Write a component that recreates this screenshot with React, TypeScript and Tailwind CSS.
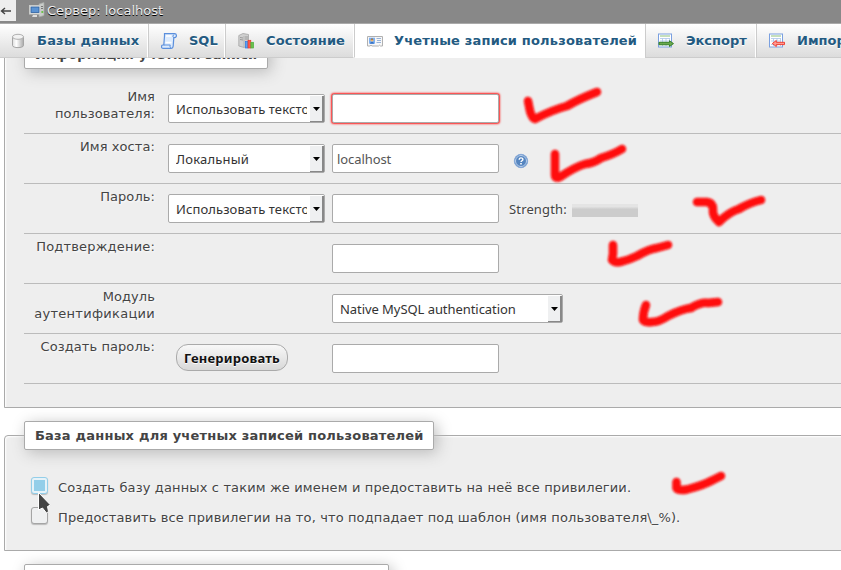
import type { ReactNode } from 'react';

function ServerIcon() {
  return (
    <svg width="16" height="16" viewBox="0 0 16 16" className="shrink-0">
      <path d="M10 2l5-1.500v13L10 15z" fill="#c9ccc9" stroke="#a5a8a5" strokeWidth=".7" />
      <path d="M11 4.500h3M11 6.500h3" stroke="#777" />
      <rect x="12.400" y="9" width="1.800" height="2" fill="#6bc24a" />
      <rect x=".5" y="3.500" width="11" height="8.500" fill="#e4e6e4" stroke="#c9cbc9" />
      <rect x="2" y="5" width="8" height="5.500" fill="#5b93d3" stroke="#2d5f9e" strokeWidth=".8" />
      <path d="M4 13h4v2H3z" fill="#ddd" />
    </svg>
  );
}

function DbIcon() {
  return (
    <svg width="16" height="16" viewBox="0 0 16 16" className="shrink-0">
      <defs>
        <linearGradient id="cyl" x1="0" x2="1" y1="0" y2="0">
          <stop offset="0" stopColor="#ddd" />
          <stop offset=".35" stopColor="#fff" />
          <stop offset="1" stopColor="#aaa" />
        </linearGradient>
      </defs>
      <path d="M3.500 3.800v8.700c0 2.800 11 2.800 11 0V3.800z" fill="url(#cyl)" stroke="#a5a5a5" />
      <ellipse cx="9" cy="3.800" rx="5.500" ry="2.500" fill="#f2f2f2" stroke="#b0b0b0" />
    </svg>
  );
}

function SqlIcon() {
  return (
    <svg width="16" height="16" viewBox="0 0 16 16" className="shrink-0">
      <path d="M3.500.6h10c2.600 0 2.400 4 .3 4h-1l-.6 8.400c-.2 1.500-1 2.400-2.200 2.400H2c-2 0-2-3.400 0-3.400h.8L3.500 3z" fill="#dcebfd" stroke="#5b8fdc" strokeWidth="1.200" />
      <path d="M2.800 12h6.500c-.8 1 0 3 .7 3.200M12.700 4.500c-1.200-.6-1-2.500.5-2.900" fill="none" stroke="#5b8fdc" />
      <path d="M5 3h5.500M4.500 9.500h6" stroke="#fff" strokeWidth="1.500" />
    </svg>
  );
}

function StatusIcon() {
  return (
    <svg width="16" height="16" viewBox="0 0 16 16" className="shrink-0">
      <path d="M.8 2.500L5 .5l5.500 1v11L6 14.500.8 13z" fill="#d0d0d0" stroke="#a5a5a5" strokeWidth=".8" />
      <path d="M6 3v11" stroke="#aaa" strokeWidth=".7" />
      <path d="M2 4.500l3 .5M2 6.500l3 .5M7 4h3M7 6h3" stroke="#8d8d8d" strokeWidth=".8" />
      <rect x="7.400" y="8.500" width="2.500" height="6.500" fill="#5aa2f0" stroke="#2c7be5" strokeWidth=".7" />
      <rect x="10" y="7.300" width="2.800" height="7.700" fill="#ff5b4a" stroke="#e83a2e" strokeWidth=".7" />
      <rect x="12.900" y="9.300" width="2.700" height="5.700" fill="#6cc04d" stroke="#4caf3f" strokeWidth=".7" />
    </svg>
  );
}

function UsersIcon() {
  return (
    <svg width="16" height="16" viewBox="0 0 16 16" className="ml-px shrink-0">
      <path d="M.5 3.500h15v9.500h-2l-1-.8-1 .8H5l-1-.8-1 .8H.5z" fill="#f7f7f7" stroke="#b0b0b0" />
      <rect x="2" y="4.700" width="6" height="6" fill="#7db0f2" />
      <path d="M3 10.700c0-2.700 4-2.700 4 0z" fill="#3572c6" />
      <circle cx="5" cy="7.200" r="1.400" fill="#e9b26a" />
      <path d="M3.700 6.500c.3-1.300 2.300-1.300 2.600 0z" fill="#7b4a1e" />
      <path d="M9.500 5.500H14M10 7.500h4M9.500 9.500H14" stroke="#9ab4d8" />
    </svg>
  );
}

function SheetIcon({ incoming }: { incoming?: boolean }) {
  return (
    <svg width="17" height="16" viewBox="0 0 17 16" className="-mr-px shrink-0">
      <rect x=".5" y="1" width="13" height="13" fill="#fff" stroke="#7aa0e0" />
      <path d="M2 3h10" stroke="#8cc07a" />
      <path d="M2 5.500h10M2 8h10M2 11.500h10M4.500 5.500V13M8 5.500V13M11.500 5.500V13" stroke="#aac4ea" strokeWidth=".8" />
      {incoming ? (
        <path d="M15.500 9.300H7.300V7.500L3.300 10.500l4 3v-1.900h8.200z" fill="#ff9a90" stroke="#f03428" strokeWidth=".9" />
      ) : (
        <path d="M1 9.300h10.500V7.700l4 2.900-4 2.900v-1.700H1z" fill="#6aa84f" stroke="#2f7a1e" strokeWidth=".9" />
      )}
    </svg>
  );
}

function HelpIcon() {
  return (
    <svg width="16" height="16" viewBox="0 0 16 16" className="ml-[14px] mt-[9px] shrink-0">
      <circle cx="8" cy="8" r="6.700" fill="#5585c0" stroke="#86a9d8" />
      <circle cx="8" cy="8" r="5.500" fill="none" stroke="#c5d7ef" strokeWidth=".9" />
      <path d="M6.200 6.700c0-2.500 3.700-2.300 3.700-.3 0 1.400-1.900 1.300-1.900 2.700" fill="none" stroke="#fff" strokeWidth="1.400" />
      <rect x="7.200" y="10" width="1.600" height="1.500" fill="#fff" />
    </svg>
  );
}

function Tab({ icon, label, width, active }: { icon: ReactNode; label: string; width: string; active?: boolean }) {
  return (
    <a
      className={`flex h-[34px] shrink-0 items-center whitespace-nowrap border-l border-r border-b border-l-[#ccc] border-r-white text-[13px] font-bold text-[#235a81] ${width} ${
        active ? 'border-b-white bg-white pl-[11px]' : 'border-b-[#ccc] bg-linear-to-b from-white to-[#dcdcdc] pl-3'
      }`}
    >
      {icon}
      <span className={`[text-shadow:0_1px_0_#fff] ${active ? 'ml-[11px]' : 'ml-3'}`}>{label}</span>
    </a>
  );
}

function Select({ label, width }: { label: string; width: string }) {
  return (
    <div className={`flex h-[29px] shrink-0 rounded-[2px] border border-[#aaa] bg-white font-['Noto_Sans',sans-serif] text-[13px] text-[#333] ${width}`}>
      <span className="ml-[7px] flex-1 overflow-hidden whitespace-nowrap leading-[28px]">{label}</span>
      <span className="ml-[3px] mt-px flex h-[26px] w-[14px] justify-end border-b border-r-2 border-[#888] bg-[#eff0f1] pr-[2px] pt-[11px]">
        <svg width="7" height="4" viewBox="0 0 7 4">
          <path d="M0 0h7L3.500 4z" fill="#000" />
        </svg>
      </span>
    </div>
  );
}

function Input({ value, invalid }: { value?: string; invalid?: boolean }) {
  return (
    <div
      className={`h-[29px] w-[167px] shrink-0 rounded-[2px] border border-[#aaa] bg-white pl-1 font-['Noto_Sans',sans-serif] text-[13px] leading-[28px] tracking-[-0.08px] text-[#555] ${
        invalid ? 'shadow-[0_0_2px_1px_#ff2020]' : ''
      }`}
    >
      {value}
    </div>
  );
}

function Row({ label, control, children }: { label: ReactNode; control?: ReactNode; children?: ReactNode }) {
  return (
    <div className="flex h-[50px] items-start border-b border-[#bbb]">
      <div className="w-[131px] shrink-0 pt-[4px] text-right leading-[17px] tracking-[0.08px]">{label}</div>
      <div className="ml-[13px] mt-[10px] flex w-[164px] shrink-0">{control}</div>
      <div className="mt-[10px] flex">{children}</div>
    </div>
  );
}

function Legend({ width, children }: { width: string; children?: ReactNode }) {
  return (
    <div
      className={`ml-[19px] h-[29px] shrink-0 whitespace-nowrap rounded-[2px] border border-[#aaa] bg-white pl-[10px] font-bold leading-[27px] text-[#444] shadow-[3px_3px_15px_#bbb] ${width}`}
    >
      {children}
    </div>
  );
}

function Fieldset({ height, children }: { height: string; children: ReactNode }) {
  return (
    <section
      className={`-mr-5 ml-1 flex shrink-0 flex-col rounded-tl-[4px] border border-[#aaa] bg-[#eee] shadow-[inset_1px_1px_2px_#fff] [text-shadow:1px_1px_2px_#fff] ${height}`}
    >
      {children}
    </section>
  );
}

function Checkbox({ hot }: { hot?: boolean }) {
  return (
    <span
      className={`flex size-[17px] shrink-0 rounded-[3px] border p-[2px] shadow-[0_1px_1px_#bbb] ${
        hot ? 'border-[#93cee9] bg-[#e6f2f8]' : 'border-[#a5a5a5] bg-[#eff0f1]'
      }`}
    >
      {hot && <span className="size-[11px] bg-[#93cee9]" />}
    </span>
  );
}

const marks = [
  'M528 101L530 111Q532 118 535 119Q552 110 567 106Q579 99 597 92',
  'M555 154L555 175Q555 179 560 177Q575 167 585 164Q594 163 601 158Q614 154 622 149',
  'M697 202H707Q713 203 713 209Q712 216 719 222Q729 212 739 209Q749 203 761 200',
  'M613 245V254L612 260Q614 263 620 262Q629 260 637 256Q649 249 657 248L668 245',
  'M646 305Q643 312 643 320Q644 323 652 322Q659 322 668 316Q682 309 691 308Q701 302 708 303L718 302',
  'M676.500 482V488Q678 491 687 489.500Q704 485 713 480L721 476',
];

export default function App() {
  return (
    <div className="relative flex h-[570px] w-[841px] flex-col overflow-hidden bg-white font-['DejaVu_Sans',sans-serif] text-[13px] text-[#444]">
      <header className="flex h-[23px] shrink-0 items-start bg-[#888] text-white">
        <div className="flex h-[21px] w-4 items-center bg-[#eee]">
          <svg width="12" height="10" viewBox="0 0 12 10">
            <path d="M1.500 5h9.500M5 2L1.500 5 5 8" fill="none" stroke="#444" strokeWidth="1.400" />
          </svg>
        </div>
        <div className="ml-[13px] mt-[2px]">
          <ServerIcon />
        </div>
        <span className="ml-[2px] leading-[21px] text-[#eee] [text-shadow:0_1px_0_#000]">Сервер: localhost</span>
      </header>

      <nav className="flex shrink-0 border-t border-[#aaa]">
        <Tab icon={<DbIcon />} label="Базы данных" width="-ml-1 w-[152px] tracking-[0.22px]" />
        <Tab icon={<SqlIcon />} label="SQL" width="w-[77px]" />
        <Tab icon={<StatusIcon />} label="Состояние" width="w-[129px] tracking-[0.13px]" />
        <Tab icon={<UsersIcon />} label="Учетные записи пользователей" width="w-[291px] tracking-[0.18px]" active />
        <Tab icon={<SheetIcon />} label="Экспорт" width="w-[111px]" />
        <Tab icon={<SheetIcon incoming />} label="Импорт" width="w-[111px]" />
      </nav>

      <main className="flex min-h-0 flex-1 flex-col overflow-hidden">
        <div className="-mt-[4px] flex shrink-0 flex-col">
          <Fieldset height="h-[354px]">
            <div className="-mt-[15px]">
              <Legend width="w-[244px] tracking-[0.15px]">Информация учетной записи</Legend>
            </div>
            <div className="ml-[19px] mt-[15px]">
              <Row label={<>Имя<br />пользователя:</>} control={<Select label="Использовать текстовое поле" width="w-[157px] tracking-[0.1px]" />}>
                <Input invalid />
              </Row>
              <Row label="Имя хоста:" control={<Select label="Локальный" width="w-[157px] tracking-[0.2px]" />}>
                <Input value="localhost" />
                <HelpIcon />
              </Row>
              <Row label="Пароль:" control={<Select label="Использовать текстовое поле" width="w-[157px] tracking-[0.1px]" />}>
                <Input />
                <span className="ml-[10px] font-['Noto_Sans',sans-serif] leading-[30px] tracking-[0.15px]">Strength:</span>
                <span className="ml-[5px] mt-[10px] h-[13px] w-[66px] bg-linear-to-b from-[#e4e4e4] from-20% to-[#ccc] to-40%" />
              </Row>
              <Row label={<span className="tracking-[0.18px]">Подтверждение:</span>}>
                <Input />
              </Row>
              <Row label={<>Модуль<br /><span className="tracking-[0.28px]">аутентификации</span></>}>
                <Select label="Native MySQL authentication" width="w-[231px] tracking-[-0.06px]" />
              </Row>
              <Row
                label="Создать пароль:"
                control={
                  <button className="ml-2 h-[27px] w-[112px] whitespace-nowrap rounded-[12px] border border-[#aaa] bg-linear-to-b from-[#f8f8f8] to-[#d8d8d8] font-['Noto_Sans',sans-serif] text-[13px] font-bold leading-[26px] tracking-[0.2px] text-[#111] [text-shadow:0_1px_0_#fff]">
                    Генерировать
                  </button>
                }
              >
                <Input />
              </Row>
            </div>
          </Fieldset>

          <div className="mt-[27px] flex flex-col">
            <Fieldset height="h-[116px]">
              <div className="-mt-[15px]">
                <Legend width="w-[410px] tracking-[0.21px]">База данных для учетных записей пользователей</Legend>
              </div>
              <div className="ml-[26px] mt-[27px] flex h-[17px] items-start">
                <Checkbox hot />
                <span className="ml-[10px] whitespace-nowrap leading-[21px] tracking-[0.14px]">
                  Создать базу данных с таким же именем и предоставить на неё все привилегии.
                </span>
              </div>
              <div className="ml-[26px] mt-[13px] flex h-[17px] items-start">
                <Checkbox />
                <span className="ml-[10px] whitespace-nowrap leading-[21px] tracking-[0.12px]">
                  Предоставить все привилегии на то, что подпадает под шаблон (имя пользователя\_%).
                </span>
              </div>
            </Fieldset>
          </div>
          <div className="ml-[5px] mt-[13px]">
            <Legend width="w-[365px]" />
          </div>
        </div>
      </main>

      <svg className="absolute left-0 top-0" width="841" height="570" viewBox="0 0 841 570">
        <defs>
          <filter id="soft" filterUnits="userSpaceOnUse" x="0" y="0" width="841" height="570">
            <feGaussianBlur stdDeviation="0.8" />
          </filter>
        </defs>
        <g filter="url(#soft)" fill="none" stroke="#ff0808" strokeWidth="8.500" strokeLinecap="round" strokeLinejoin="round">
          {marks.map((d) => (
            <path key={d} d={d} />
          ))}
        </g>
        <path d="M38.500 492.500V510l4-2 4 5 2-1.500-1-5 3-1.500z" fill="#444" stroke="#fff" strokeWidth="1" />
      </svg>
    </div>
  );
}
